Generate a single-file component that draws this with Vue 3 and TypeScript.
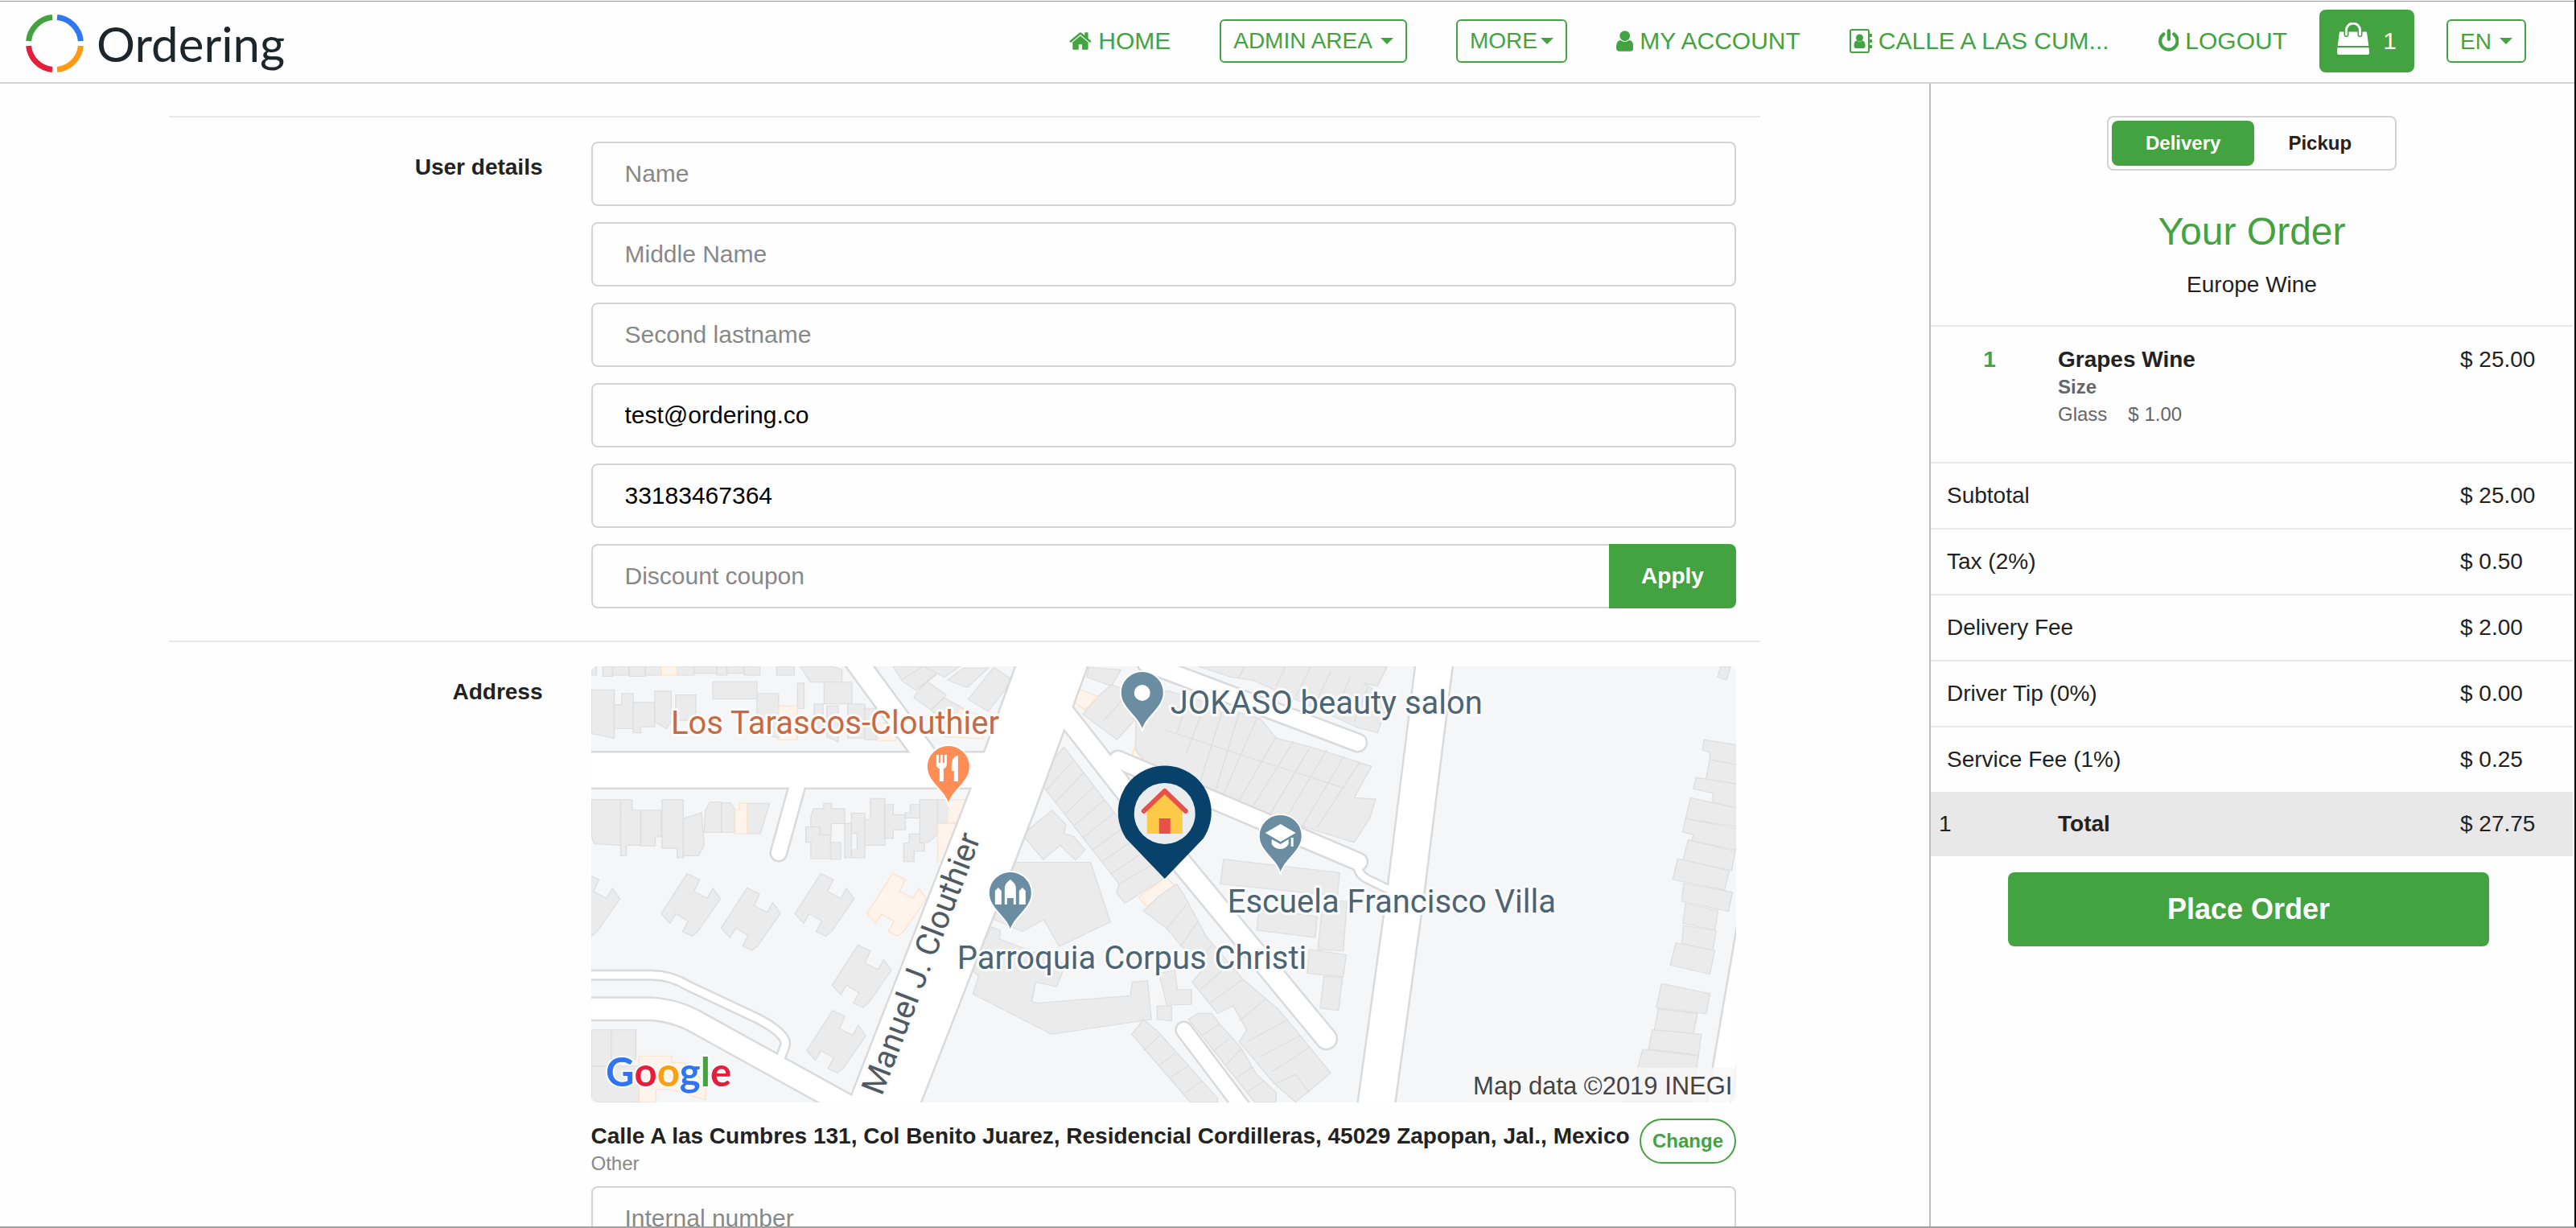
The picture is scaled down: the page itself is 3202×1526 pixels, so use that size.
<script setup lang="ts">
import { ref } from 'vue'

interface Field {
  name: string
  label: string
  type: string
  value: string
}

interface Fee {
  label: string
  amount: string
}

const fields = ref<Field[]>([
  { name: 'name', label: 'Name', type: 'text', value: '' },
  { name: 'middle-name', label: 'Middle Name', type: 'text', value: '' },
  { name: 'second-lastname', label: 'Second lastname', type: 'text', value: '' },
  { name: 'email', label: 'Email', type: 'email', value: 'test@ordering.co' },
  { name: 'phone', label: 'Phone', type: 'tel', value: '33183467364' },
])

const coupon = ref('')
const internalNumber = ref('')
const language = ref('EN')
const mode = ref<'Delivery' | 'Pickup'>('Delivery')
const modes: Array<'Delivery' | 'Pickup'> = ['Delivery', 'Pickup']

const fees: Fee[] = [
  { label: 'Subtotal', amount: '$ 25.00' },
  { label: 'Tax (2%)', amount: '$ 0.50' },
  { label: 'Delivery Fee', amount: '$ 2.00' },
  { label: 'Driver Tip (0%)', amount: '$ 0.00' },
  { label: 'Service Fee (1%)', amount: '$ 0.25' },
]

// Street centre lines of the static map, with their widths
const roads: Array<{ d: string; w: number }> = [
  { d: 'M-10 384H75Q98 384 120 397L205 437Q248 459 240 474L234 490', w: 9 },
  { d: 'M-10 426H75Q105 428 130 442L340 558', w: 26 },
  { d: 'M-10 129H490', w: 43 },
  { d: 'M325 -12L422 120', w: 26 },
  { d: 'M257 145L233 232', w: 18 },
  { d: 'M690 -4L953 95', w: 20 },
  { d: 'M655 116L954 243', w: 20 },
  { d: 'M954 243Q950 258 968 266L1005 284', w: 8 },
  { d: 'M560 22L735 246L914 463', w: 24 },
  { d: 'M737 452L820 562', w: 18 },
  { d: 'M1049 -10L1013 278L975 552', w: 44 },
  { d: 'M1440 320L1400 552', w: 27 },
  { d: 'M576 -10L511 167L358 560', w: 82 },
]

const westBuildings: string[] = [
  '30,49 43,49 43,78 30,78', '60,49 86,49 86,82 60,82', '86,49 128,49 128,78 86,78',
  '130,49 172,49 172,82 130,82', '172,49 214,49 214,78 172,78', '255,49 300,49 300,78 255,78',
  '300,49 360,49 360,72 300,72', '360,49 387,49 387,78 360,78', '387,49 432,49 432,72 387,72',
  '432,49 474,49 474,78 432,78', '518,49 564,49 564,78 518,78', '580,49 665,49 690,60 690,102 607,102',
  '30,128 90,128 90,290 30,275', '90,178 110,178 110,140 140,140 140,258 90,258',
  '140,170 197,170 197,252 160,252 160,272 140,272', '197,132 240,132 240,235 227,258 197,235',
  '252,145 305,145 305,230 252,230', '350,100 466,100 466,158 350,158',
  '466,140 523,140 523,290 466,270', '573,105 590,105 590,190 573,190',
  '617,175 640,175 640,265 617,265', '643,102 716,102 716,175 643,175',
  '650,182 680,182 680,303 650,285', '705,175 750,175 750,290 705,290',
  '750,190 780,190 780,295 750,295', '825,49 905,49 940,70 885,130 850,100',
  '885,140 915,100 965,145 925,195 880,155', '905,49 1000,49 960,85',
  '968,95 1010,55 1075,55 1020,120', '1022,160 1090,52 1140,95 1075,200',
  '925,195 960,155 1010,190 960,240',
  '30,497 107,497 107,650 38,645 30,620', '107,497 137,497 137,532 160,532 160,650 122,650 122,685 107,685',
  '160,532 214,532 214,622 198,622 198,652 160,652', '216,497 272,497 272,692 256,692 256,660 216,660',
  '272,560 320,540 327,650 312,685 272,685', '330,532 342,505 373,505 373,607 327,607',
  '373,507 397,507 408,532 408,607 373,607', '440,509 499,509 475,611 440,611',
  '608,555 615,527 642,527 642,509 662,509 662,527 697,527 697,577 662,577 662,615 632,615 632,588 608,588',
  '595,588 632,588 632,615 660,615 660,695 608,695 608,640 595,640', '660,640 687,640 687,697 660,697',
  '697,577 715,577 715,692 697,692', '715,542 750,542 750,692 715,692 715,665 730,665 730,610 715,610',
  '765,493 803,493 803,650 750,650 750,563 765,563', '803,513 825,513 825,547 857,547 857,598 825,598 825,627 803,627',
  '857,540 870,540 870,513 895,513 895,558 857,558', '895,497 942,497 942,612 918,640 895,640',
  '942,497 968,497 968,573 942,573', '867,612 895,612 895,642 907,642 907,670 880,670 880,705 853,705 853,642 867,642',
  '30,1270 82,1270 82,1392 30,1392', '82,1270 147,1270 147,1370 82,1392', '30,1392 155,1392 155,1513 30,1513',
  '1275,320 1540,760 1435,845 1413,810 1420,780 1203,425 1230,385',
  '1165,615 1243,532 1280,580 1275,610 1300,620 1330,665 1305,700 1265,650 1220,698',
  '1125,707 1345,707 1397,908 1262,990 1222,900 1165,940 1057,880 1075,850',
  '1085,925 1107,935 1105,965 1280,1050 1255,1125 1200,1110 1190,1175 1205,1180 1450,1155 1455,1110 1495,1105 1505,1235 1242,1285 1035,1150 1050,1090 1025,1060',
  '1340,52 1425,60 1400,115 1335,85', '1365,150 1400,110 1430,125 1460,230 1415,295 1325,210',
  '1505,250 1560,270 1560,400 1490,350',
]

const westHighlights: string[] = [
  '214,49 255,49 255,78 214,78', '523,182 572,182 572,295 523,295', '785,240 832,240 832,298 785,298',
  '1000,190 1078,225 1060,292 960,285', '408,532 420,532 420,509 440,509 440,611 408,611',
  '968,497 1015,497 995,573 968,573', '942,577 993,577 960,703 942,703',
  '155,1358 242,1358 242,1380 275,1380 330,1450 330,1505 240,1470 200,1470 200,1513 155,1513',
  '1310,123 1365,150 1330,195 1297,165', '1480,240 1515,255 1480,378 1450,365',
]

const villa = '282,745 315,765 300,805 335,828 350,795 370,830 310,940 295,955 270,940 285,905 252,880 237,912 214,880'
const villas: Array<[number, number]> = [[-265, 0], [0, 0], [158, 48], [352, 0], [450, 240], [383, 460]]

const eastBuildings: string[] = [
  '100,49 585,49 560,115 525,105 590,160 560,272 510,255 240,95 185,85',
  '20,130 260,225 300,290 390,320 545,385 500,490 555,495 540,560 500,640 400,600 200,515 0,430 -60,330 -60,180',
  '165,697 463,742 457,820 157,780', '257,860 405,890 400,960 250,935', '420,835 482,838 472,1005 407,1000',
  '385,1000 480,1018 472,1092 380,1080', '423,1090 470,1095 460,1205 413,1197',
  '0,820 45,780 65,820 120,955 215,1100 305,1200 350,1270 440,1415 350,1513 295,1450 205,1310 225,1270 190,1190 150,1215 85,1110 110,1070 20,930 -40,870',
  '75,1235 100,1215 135,1215 155,1250 210,1330 250,1420 300,1480 300,1513 245,1513 110,1290',
  '-70,1285 -40,1235 0,1280 150,1500 150,1513 80,1513', '0,1080 40,1070 47,1135 83,1135 83,1185 20,1187',
  '-5,1190 32,1190 32,1240 -5,1235', '1440,49 1465,49 1455,95 1432,85',
  '1397,295 1490,315 1490,382 1412,362 1412,338 1393,330', '1412,362 1490,382 1490,445 1402,428',
  '1377,422 1490,447 1490,528 1420,505 1420,475 1370,460', '1363,490 1490,528 1490,590 1350,560',
  '1350,560 1490,597 1478,665 1365,635 1370,615 1343,605', '1357,632 1477,670 1468,735 1343,700',
  '1330,695 1462,735 1450,800 1317,765', '1345,778 1470,807 1460,872 1340,838',
  '1350,845 1433,870 1425,935 1343,912', '1345,920 1428,937 1420,1003 1340,980',
  '1325,978 1425,1003 1412,1083 1311,1053', '1288,1115 1412,1148 1403,1216 1275,1195',
  '1280,1200 1380,1215 1370,1282 1270,1270', '1265,1270 1390,1285 1383,1355 1255,1335',
  '1240,1335 1383,1357 1375,1420 1225,1410', '1225,1415 1375,1425 1365,1513 1190,1513',
]

// Plot boundaries inside the terraced rows
const westPlots =
  'M1228 465L1300 365M1252 505L1328 405M1277 545L1355 452M1300 585L1382 497M1325 625L1408 540M1350 665L1435 588M1375 705L1460 630M1400 745L1485 672M1420 780L1512 712M845 95L905 49M885 130L940 75M1380 230L1430 160'
const eastPlots =
  'M75 155L45 275M120 170L70 340M165 187L105 440M205 205L145 465M250 225L165 480M300 285L205 500M345 300L240 520M385 325L285 545M430 330L325 560M475 350L365 590M515 370L405 590M20 265L480 460M205 85L220 49M300 115L325 49M350 150L390 49M400 175L440 65M450 205L490 85M500 235L535 120M20 930L70 850M55 990L100 905M85 1060L135 985M105 1135L180 1050M130 1180L215 1100M205 1240L275 1165M225 1310L325 1240M260 1360L360 1290M290 1410L385 1330M300 1450L350 1420L385 1480M110 1290L155 1250M140 1340L180 1300M170 1390L210 1335M200 1430L240 1395M225 1480L270 1440M-40 1340L0 1290M0 1390L40 1350M30 1430L75 1390M70 1480L110 1440'
</script>

<template>
  <div class="page">
    <header class="topbar">
      <a class="brand" href="#" aria-label="Ordering">
        <svg class="brand-mark" viewBox="0 0 72 72" fill="none" stroke-width="7" aria-hidden="true">
          <path d="M3.6 33A32.5 32.5 0 0 1 33 3.6" stroke="#43a340" />
          <path d="M39 3.6A32.5 32.5 0 0 1 68.4 33" stroke="#2f78f2" />
          <path d="M68.4 39A32.5 32.5 0 0 1 39 68.4" stroke="#fd9a12" />
          <path d="M33 68.4A32.5 32.5 0 0 1 3.6 39" stroke="#e51f3b" />
        </svg>
        <span class="brand-name">Ordering</span>
      </a>

      <nav class="menu">
        <a class="link" href="#">
          <svg class="icon" viewBox="64 0 1664 1792" aria-hidden="true"><path d="M1472 992v480q0 26-19 45t-45 19h-384v-384h-256v384h-384q-26 0-45-19t-19-45v-480q0-1 .5-3t.5-3l575-474 575 474q1 2 1 6zm223-69l-62 74q-8 9-21 11h-3q-13 0-21-7l-692-577-692 577q-12 8-24 7-13-2-21-11l-62-74q-8-10-7-23.500t11-21.500l719-599q32-26 76-26t76 26l244 204v-195q0-14 9-23t23-9h192q14 0 23 9t9 23v408l219 182q10 8 11 21.500t-7 23.500z" /></svg>
          <span>HOME</span>
        </a>
        <button class="outlined" type="button">ADMIN AREA <svg class="caret" viewBox="0 0 16 8" aria-hidden="true"><path d="M0 0h16l-8 8z" /></svg></button>
        <button class="outlined tight" type="button">MORE<svg class="caret" viewBox="0 0 16 8" aria-hidden="true"><path d="M0 0h16l-8 8z" /></svg></button>
        <a class="link" href="#">
          <svg class="icon" viewBox="256 0 1280 1792" aria-hidden="true"><path d="M1536 1399q0 109-62.500 187t-150.500 78h-854q-88 0-150.500-78t-62.500-187q0-85 8.500-160.500t31.500-152 58.500-131 94-89 134.500-34.500q131 128 313 128t313-128q76 0 134.500 34.500t94 89 58.500 131 31.500 152 8.500 160.500zm-256-887q0 159-112.500 271.500t-271.500 112.500-271.500-112.500-112.500-271.500 112.500-271.500 271.500-112.500 271.500 112.500 112.500 271.500z" /></svg>
          <span>MY ACCOUNT</span>
        </a>
        <a class="link" href="#">
          <svg class="icon" viewBox="0 0 28 30" aria-hidden="true">
            <rect x="1" y="1" width="23" height="28" rx="2" fill="none" stroke="currentColor" stroke-width="2" />
            <path d="M25 6h2q1 0 1 1v2q0 1-1 1h-2zM25 13h2q1 0 1 1v2q0 1-1 1h-2zM25 20h2q1 0 1 1v2q0 1-1 1h-2z" />
            <circle cx="12.500" cy="11" r="4.500" />
            <path d="M9 14.500q3.500 2.500 7 0 3.500.5 3.500 6 0 3.500-2.500 3.500h-9q-2.500 0-2.500-3.500 0-5.500 3.500-6z" />
          </svg>
          <span>CALLE A LAS CUM...</span>
        </a>
        <a class="link" href="#">
          <svg class="icon" viewBox="128 0 1536 1792" aria-hidden="true"><path d="M1664 896q0 156-61 298t-164 245-245 164-298 61-298-61-245-164-164-245-61-298q0-182 80.500-343t226.500-270q43-32 95.500-25t83.500 50q32 42 24.500 94.500t-49.500 84.500q-98 74-151.500 181t-53.500 228q0 104 40.500 198.500t109.500 163.500 163.500 109.500 198.500 40.500 198.500-40.500 163.500-109.500 109.500-163.500 40.500-198.500q0-121-53.500-228t-151.500-181q-42-32-49.500-84.500t24.500-94.500q31-43 84-50t95 25q146 109 226.500 270t80.500 343zm-640-768v640q0 52-38 90t-90 38-90-38-38-90v-640q0-52 38-90t90-38 90 38 38 90z" /></svg>
          <span>LOGOUT</span>
        </a>
        <div class="tools">
          <button class="cart" type="button" aria-label="Cart, 1 item">
            <svg class="bag" viewBox="0 0 40 40" aria-hidden="true">
              <path d="M3 11.500h34L39.300 29H.7zM.5 31h39l.5 6.500q0 2.500-2.500 2.500h-35Q0 40 0 37.500z" />
              <path d="M11.500 15V9.500a8.500 8.500 0 0 1 17 0V15" fill="none" stroke="#43a340" stroke-width="6" stroke-linecap="round" />
              <path d="M11.500 15V9.500a8.500 8.500 0 0 1 17 0V15" fill="none" stroke="#fff" stroke-width="3" stroke-linecap="round" />
            </svg>
            <span>1</span>
          </button>
          <label class="language outlined">
            <select v-model="language" aria-label="Language">
              <option>EN</option>
              <option>ES</option>
            </select>
            <svg class="caret" viewBox="0 0 16 8" aria-hidden="true"><path d="M0 0h16l-8 8z" /></svg>
          </label>
        </div>
      </nav>
    </header>

    <div class="columns">
      <main class="checkout">
        <section class="group" aria-labelledby="user-heading">
          <h2 id="user-heading" class="group-title">User details</h2>
          <div class="group-body">
            <input
              v-for="field in fields"
              :key="field.name"
              v-model="field.value"
              class="field"
              :name="field.name"
              :type="field.type"
              :placeholder="field.label"
              :aria-label="field.label"
            />
            <div class="coupon">
              <input v-model="coupon" class="field" name="coupon" type="text" placeholder="Discount coupon" aria-label="Discount coupon" />
              <button class="apply" type="button">Apply</button>
            </div>
          </div>
        </section>

        <section class="group" aria-labelledby="address-heading">
          <h2 id="address-heading" class="group-title">Address</h2>
          <div class="group-body">
            <svg class="map" viewBox="0 0 1424 542" role="img" aria-label="Map of the delivery address">
              <rect width="1424" height="542" fill="#f5f6f8" />
              <g class="buildings" transform="translate(-14 -18) scale(.472 .37)">
                <polygon v-for="(p, i) in westBuildings" :key="i" :points="p" />
                <polygon v-for="(p, i) in westHighlights" :key="'h' + i" class="highlight" :points="p" />
                <polygon v-for="(v, i) in villas" :key="'v' + i" :points="villa" :transform="`translate(${v[0]} ${v[1]})`" />
                <polygon class="highlight" :points="villa" transform="translate(542 0)" />
                <polygon class="highlight" points="1472,825 1545,755 1568,790 1495,858" />
                <path :d="westPlots" />
              </g>
              <g class="buildings" transform="translate(706 -18) scale(.485 .37)">
                <polygon v-for="(p, i) in eastBuildings" :key="i" :points="p" />
                <path :d="eastPlots" />
              </g>
              <g fill="none" stroke="#dadada" stroke-linecap="round" stroke-linejoin="round">
                <path v-for="(r, i) in roads" :key="i" :d="r.d" :stroke-width="r.w + 5" />
              </g>
              <g fill="none" stroke="#fff" stroke-linecap="round" stroke-linejoin="round">
                <path v-for="(r, i) in roads" :key="i" :d="r.d" :stroke-width="r.w" />
              </g>

              <g class="pin" transform="translate(685 33)">
                <path d="M0 48C-3 30-27 20-27 0A27 27 0 1 1 27 0C27 20 3 30 0 48Z" />
                <circle r="10" fill="#fff" stroke="none" />
              </g>
              <g class="pin food" transform="translate(444 125)">
                <path d="M0 48C-3 30-27 20-27 0A27 27 0 1 1 27 0C27 20 3 30 0 48Z" />
                <path class="glyph" d="M-15-15h3V-5h2v-10h3V-5h2v-10h3V-3q0 4-4 5V18h-5V2q-4-1-4-5zM12-14V18H7V5H4Q3-14 12-14Z" />
              </g>
              <g class="pin" transform="translate(521 282)">
                <path d="M0 48C-3 30-27 20-27 0A27 27 0 1 1 27 0C27 20 3 30 0 48Z" />
                <path class="glyph" d="M-19 14V-3l4-4 4 4V14ZM19 14V-3l-4-4-4 4V14ZM-7 14V-7Q-7-12 0-17 7-12 7-7V14H4V6H-4V14Z" />
              </g>
              <g class="pin" transform="translate(857 211)">
                <path d="M0 48C-3 30-27 20-27 0A27 27 0 1 1 27 0C27 20 3 30 0 48Z" />
                <path class="glyph" d="M0-15L19-4 0 7-19-4ZM-11 4L0 10 10 4V10Q6 16 0 16-7 16-11 10ZM13 2h3V13h-3Z" />
              </g>

              <g class="places">
                <text x="99" y="84" class="food-label">Los Tarascos-Clouthier</text>
                <text x="720" y="59">JOKASO beauty salon</text>
                <text x="791" y="306">Escuela Francisco Villa</text>
                <text x="455" y="376">Parroquia Corpus Christi</text>
                <text class="street" transform="translate(361 535) rotate(-69)">Manuel J. Clouthier</text>
              </g>

              <g transform="translate(713 182)">
                <path d="M0 82L-48 32A58 58 0 1 1 48 32Z" fill="#08426a" />
                <circle r="38" cy="1" fill="#e9edee" />
                <path d="M-22 26V-3L0-24 22-3V26Z" fill="#fdc949" />
                <path d="M-26-2L0-27 26-2" fill="none" stroke="#e8504b" stroke-width="6" stroke-linecap="round" stroke-linejoin="round" />
                <path d="M-7 7H7V26H-7Z" fill="#e8504b" />
              </g>

              <text x="18" y="522" class="google"><tspan fill="#2f74f0">G</tspan><tspan fill="#e51f3b">o</tspan><tspan fill="#fd9f12">o</tspan><tspan fill="#2f74f0">g</tspan><tspan fill="#43a340">l</tspan><tspan fill="#e51f3b">e</tspan></text>
              <rect x="1091" y="499" width="333" height="43" fill="#f8f8f8" fill-opacity=".8" />
              <text x="1419" y="532" class="credit">Map data ©2019 INEGI</text>
            </svg>

            <div class="destination">
              <div class="address">
                <div>
                  <p class="address-line">Calle A las Cumbres 131, Col Benito Juarez, Residencial Cordilleras, 45029 Zapopan, Jal., Mexico</p>
                  <p class="address-tag">Other</p>
                </div>
                <button class="change" type="button">Change</button>
              </div>
              <input v-model="internalNumber" class="field" name="internal-number" type="text" placeholder="Internal number" aria-label="Internal number" />
            </div>
          </div>
        </section>
      </main>

      <aside class="order">
        <div class="mode" role="group" aria-label="Order type">
          <button v-for="m in modes" :key="m" type="button" :class="{ active: mode === m }" :aria-pressed="mode === m" @click="mode = m">{{ m }}</button>
        </div>
        <h1 class="order-title">Your Order</h1>
        <p class="order-store">Europe Wine</p>
        <table class="bill">
          <colgroup>
            <col class="col-count" />
            <col />
            <col class="col-price" />
          </colgroup>
          <tbody>
            <tr class="item">
              <td class="count">1</td>
              <td>
                <div class="product">Grapes Wine</div>
                <div class="option-name">Size</div>
                <div class="option"><span>Glass</span><span>$ 1.00</span></div>
              </td>
              <td>$ 25.00</td>
            </tr>
            <tr v-for="fee in fees" :key="fee.label">
              <td class="fee" colspan="2">{{ fee.label }}</td>
              <td>{{ fee.amount }}</td>
            </tr>
          </tbody>
          <tfoot>
            <tr class="total">
              <td class="total-count">1</td>
              <th scope="row">Total</th>
              <td>$ 27.75</td>
            </tr>
          </tfoot>
        </table>
        <button class="place" type="button">Place Order</button>
      </aside>
    </div>
  </div>
</template>

<style>
body {
  background: #fefefe;
}
</style>

<style scoped>
.page {
  --green: #43a340;
  --line: #e8e8e8;
  --edge: #d3d3d3;
  box-sizing: border-box;
  display: flex;
  flex-direction: column;
  height: 100vh;
  padding-top: 1px;
  border-right: 2px solid #0a0a0a;
  border-bottom: 2px solid #a0a0a0;
  overflow: hidden;
  background: #fefefe;
  color: #222;
  font-family: "Liberation Sans", Arial, sans-serif;
  font-size: 28px;
}

.page *,
.page *::before {
  box-sizing: border-box;
}

h1,
h2,
p {
  margin: 0;
}

button,
select,
input {
  font-family: inherit;
}

button {
  margin: 0;
  cursor: pointer;
}

/* Top bar */
.topbar {
  display: flex;
  flex: none;
  align-items: center;
  justify-content: space-between;
  height: 103px;
  padding: 0 60px 2px 32px;
  border-top: 1px solid #999;
  border-bottom: 2px solid var(--edge);
}

.brand {
  display: flex;
  align-items: center;
  gap: 16px;
  padding-top: 6px;
  color: #1d262b;
  text-decoration: none;
}

.brand-mark {
  width: 72px;
  height: 72px;
}

.brand-name {
  font-family: Lato, sans-serif;
  font-size: 60px;
  line-height: 72px;
}

.menu {
  display: flex;
  align-items: center;
  gap: 61px;
}

.link {
  display: flex;
  align-items: center;
  gap: 8px;
  color: var(--green);
  font-size: 30px;
  line-height: 34px;
  text-decoration: none;
  white-space: nowrap;
}

.icon {
  height: 30px;
  fill: currentColor;
}

.outlined {
  display: flex;
  align-items: center;
  gap: 10px;
  height: 54px;
  padding: 0 15px;
  border: 2px solid var(--green);
  border-radius: 6px;
  background: transparent;
  color: var(--green);
  font-size: 28px;
  white-space: nowrap;
}

.outlined.tight {
  gap: 4px;
}

.caret {
  width: 16px;
  height: 8px;
  fill: currentColor;
}

.tools {
  display: flex;
  align-items: center;
  gap: 40px;
  margin-left: -21px;
}

.cart {
  display: flex;
  align-items: center;
  justify-content: space-between;
  width: 118px;
  height: 78px;
  padding: 0 22px;
  border: 0;
  border-radius: 8px;
  background: var(--green);
  color: #fff;
  font-size: 30px;
}

.bag {
  width: 40px;
  height: 40px;
  margin-bottom: 6px;
  fill: #fff;
}

.language select {
  padding: 0;
  border: 0;
  appearance: none;
  background: transparent;
  color: inherit;
  font-size: 28px;
}

/* Columns */
.columns {
  display: flex;
  flex: 1;
  min-height: 0;
}

.checkout {
  flex: 1;
  padding: 40px 210px 0;
  overflow-y: auto;
  scrollbar-width: none;
}

.group {
  display: grid;
  grid-template-columns: 3fr 9fr;
  padding: 30px 0 40px;
  border-top: 2px solid var(--line);
}

.group-title {
  padding: 16px 30px 0;
  font-size: 28px;
  line-height: 32px;
  text-align: right;
}

.group-body {
  display: flex;
  flex-direction: column;
  gap: 20px;
  min-width: 0;
  padding: 0 30px;
}

.field {
  width: 100%;
  height: 80px;
  padding: 0 40px;
  border: 2px solid var(--edge);
  border-radius: 8px;
  background: transparent;
  color: #000;
  font-size: 30px;
}

.field::placeholder {
  color: #888;
  opacity: 1;
}

.coupon {
  display: flex;
}

.coupon .field {
  border-right: 0;
  border-radius: 8px 0 0 8px;
}

.apply {
  flex: none;
  width: 158px;
  border: 0;
  border-radius: 0 8px 8px 0;
  background: var(--green);
  color: #fff;
  font-size: 28px;
  font-weight: bold;
}

/* Map */
.map {
  display: block;
  width: 100%;
  border-radius: 8px;
}

.buildings {
  fill: #ebebeb;
  stroke: #dedede;
  stroke-width: 3;
}

.buildings path {
  fill: none;
}

.buildings .highlight {
  fill: #fef4ec;
  stroke: #fbe3cc;
}

.pin {
  fill: #6b8da1;
  stroke: #fff;
  stroke-width: 2;
}

.pin.food {
  fill: #ff8d55;
}

.pin .glyph {
  fill: #fff;
  stroke: none;
}

.places {
  fill: #4d6472;
  stroke: #fafbfc;
  stroke-width: 6;
  stroke-linejoin: round;
  paint-order: stroke;
  font-family: Roboto, sans-serif;
  font-size: 40px;
}

.places .food-label {
  fill: #c9693f;
}

.places .street {
  fill: #505a60;
}

.google {
  font-family: Lato, sans-serif;
  font-size: 49px;
  font-weight: bold;
  stroke: #fafbfc;
  stroke-width: 4;
  paint-order: stroke;
}

.credit {
  fill: #444;
  font-size: 31px;
  text-anchor: end;
}

.destination {
  display: flex;
  flex-direction: column;
  gap: 12px;
}

.address {
  display: flex;
  justify-content: space-between;
  align-items: flex-start;
  gap: 8px;
}

.address-line {
  padding-top: 4px;
  font-size: 28px;
  font-weight: bold;
  line-height: 36px;
}

.address-tag {
  color: #888;
  font-size: 24px;
  line-height: 32px;
}

.change {
  flex: none;
  width: 120px;
  height: 56px;
  padding: 0;
  border: 2px solid var(--green);
  border-radius: 28px;
  background: transparent;
  color: var(--green);
  font-size: 24px;
  font-weight: bold;
}

/* Order summary */
.order {
  display: flex;
  flex: none;
  flex-direction: column;
  width: 25%;
  margin-right: 2px;
  padding-top: 40px;
  border-left: 2px solid #bbb;
}

.mode {
  display: flex;
  align-self: center;
  width: 360px;
  height: 68px;
  padding: 4px;
  border: 2px solid var(--edge);
  border-radius: 8px;
}

.mode button {
  padding: 0 42px;
  border: 0;
  border-radius: 8px;
  background: transparent;
  color: #222;
  font-size: 24px;
  font-weight: bold;
}

.mode button.active {
  background: var(--green);
  color: #fff;
}

.order-title {
  margin-top: 48px;
  color: var(--green);
  font-size: 48px;
  font-weight: normal;
  line-height: 56px;
  text-align: center;
}

.order-store {
  margin: 18px 0 30px;
  line-height: 40px;
  text-align: center;
}

.bill {
  width: 100%;
  border-top: 2px solid var(--line);
  border-spacing: 0;
  table-layout: fixed;
}

.col-count {
  width: 158px;
}

.col-price {
  width: 140px;
}

.bill td,
.bill th {
  height: 82px;
  padding: 0;
  border-bottom: 2px solid var(--line);
  text-align: left;
}

.bill .item td {
  height: 170px;
  padding-top: 24px;
  line-height: 34px;
  vertical-align: top;
}

.bill .item .count {
  padding-right: 12px;
  color: var(--green);
  font-weight: bold;
  text-align: center;
}

.product {
  font-weight: bold;
}

.option-name,
.option {
  color: #666;
  font-size: 24px;
}

.option-name {
  font-weight: bold;
}

.option {
  display: flex;
  gap: 26px;
}

.bill .fee {
  padding-left: 20px;
}

.bill .total td,
.bill .total th {
  height: 78px;
  background: var(--line);
}

.bill .total .total-count {
  padding-left: 10px;
}

.place {
  width: 75%;
  height: 92px;
  margin: 20px 0 0 12%;
  border: 0;
  border-radius: 8px;
  background: var(--green);
  color: #fff;
  font-size: 36px;
  font-weight: bold;
}
</style>
